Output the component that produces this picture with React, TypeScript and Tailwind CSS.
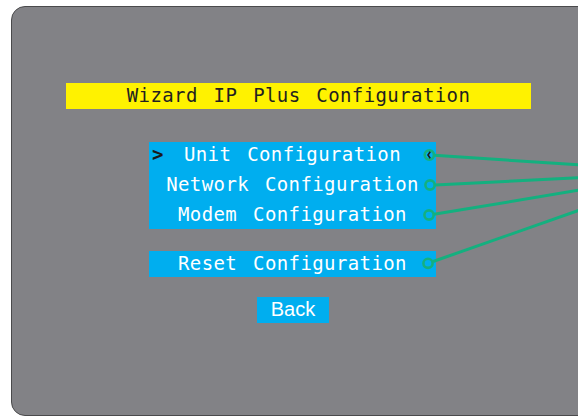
import React from 'react';

const mono = "font-['DejaVu_Sans_Mono','Liberation_Mono',monospace] text-[19px] tracking-[0.4px] [word-spacing:4px]";

const rows = ['Unit Configuration', 'Network Configuration', 'Modem Configuration'];

const App: React.FC = () => {
  return (
    <div className="relative w-[578px] h-[417px] bg-white overflow-hidden">
      <div className="ml-[11px] mt-[6px] w-[600px] h-[410px] bg-[#828286] border border-[#4a4a4c] rounded-[14px] flex flex-col">
        {/* title */}
        <div
          className={`mt-[76px] ml-[54px] w-[465px] h-[26px] bg-[#fff200] text-[#231f20] flex items-center justify-center pb-[1px] ${mono}`}
        >
          Wizard IP Plus Configuration
        </div>

        {/* main menu */}
        <div className="mt-[33px] ml-[137px] w-[287px] bg-[#00aeef] flex flex-col gap-1 pb-[1px]">
          {rows.map((label, i) => (
            <div key={label} className={`relative h-[26px] flex items-center justify-center pb-[1px] text-white ${mono}`}>
              {i === 0 && (
                <span className="absolute left-[3px] text-[#1a1a1a] font-bold">&gt;</span>
              )}
              {label}
            </div>
          ))}
        </div>

        <div className="mt-[22px] ml-[137px] w-[287px] h-[26px] bg-[#00aeef] flex items-center justify-center pb-[1px] text-white">
          <span className={mono}>Reset Configuration</span>
        </div>

        <div className="mt-[20px] ml-[245px] w-[72px] h-[26px] bg-[#00aeef] flex items-center justify-center pb-[2px] text-white font-['Liberation_Sans',Arial,sans-serif] text-[20px]">
          Back
        </div>
      </div>

      {/* callout lines */}
      <svg className="absolute inset-0 pointer-events-none" width="578" height="417" viewBox="0 0 578 417">
        <g stroke="#14b07f" strokeWidth="3" fill="none">
          <line x1="434" y1="155.3" x2="580" y2="165" />
          <line x1="435" y1="185" x2="580" y2="177.6" />
          <line x1="434" y1="214.3" x2="580" y2="190" />
          <line x1="433" y1="261.5" x2="580" y2="210" />
          <circle cx="429.3" cy="155" r="4.6" strokeWidth="2.6" />
          <circle cx="430" cy="185" r="4.6" strokeWidth="2.6" />
          <circle cx="429" cy="215" r="4.6" strokeWidth="2.6" />
          <circle cx="428" cy="263.3" r="4.6" strokeWidth="2.6" />
        </g>
        <path d="M430.2 151.8 L428 155 L430.2 158.2" stroke="#1a1a1a" strokeWidth="1.6" fill="none" />
      </svg>
    </div>
  );
};

export default App;
